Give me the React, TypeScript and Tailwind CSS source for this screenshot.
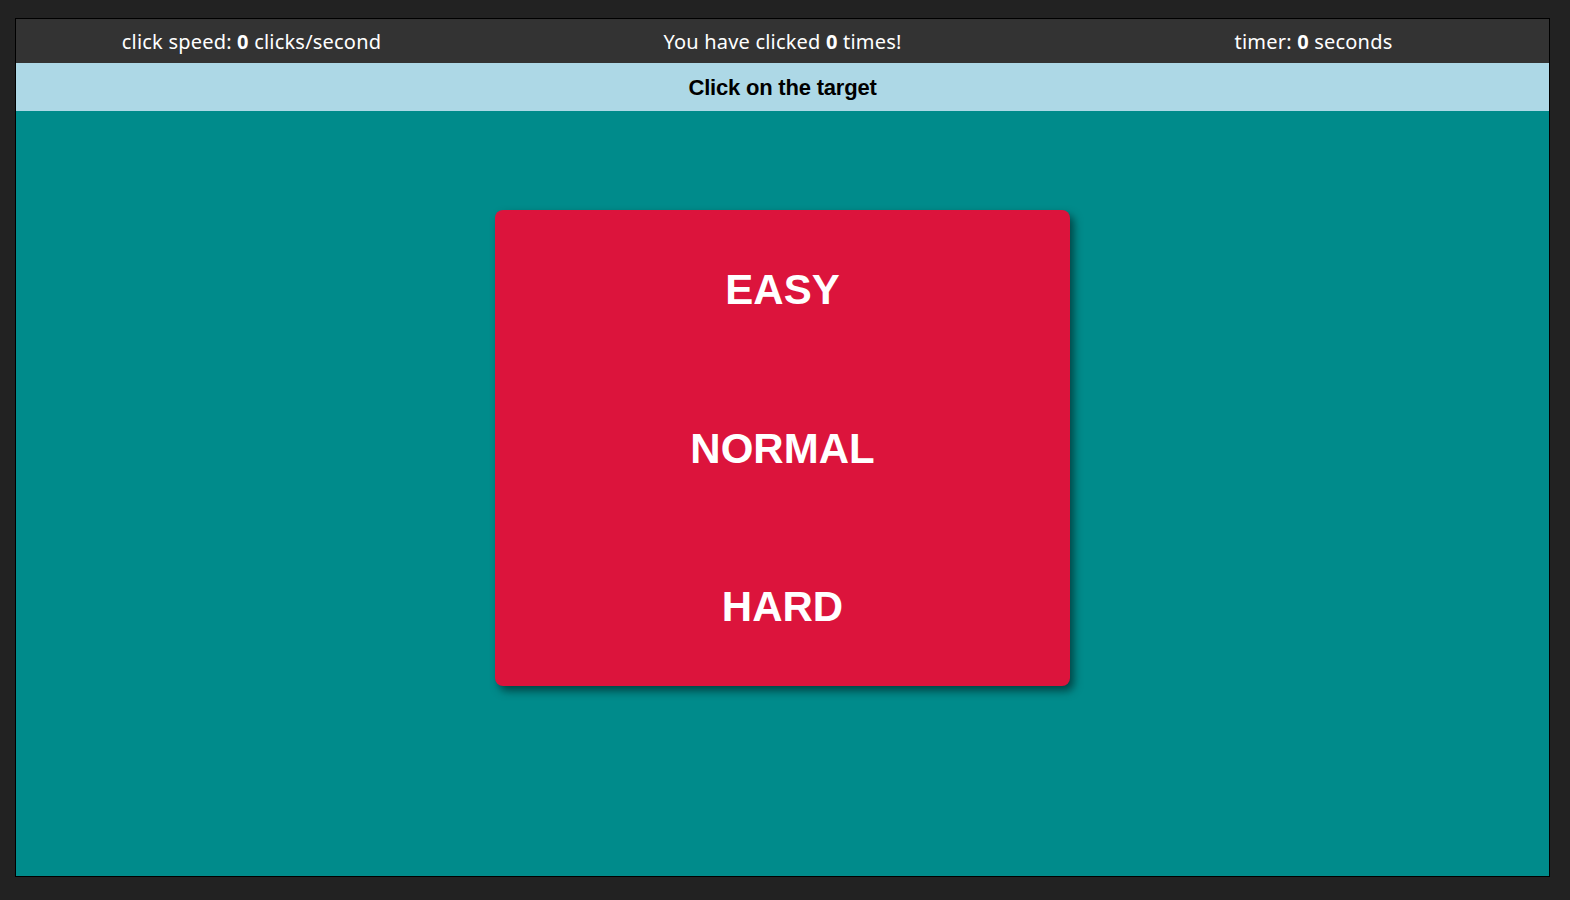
import React from "react";

export default function App() {
  const head = { fontFamily: '"Comic Sans MS", "Noto Sans", sans-serif' };
  return (
    <div className="w-[1570px] h-[900px] bg-[#222222] pt-[18px] pl-[15px]">
      <div className="w-[1535px] h-[859px] border border-black bg-[#008b8b] flex flex-col overflow-hidden">
        <div className="h-[44px] bg-[#333333] flex justify-center items-center pt-[2px] text-white text-[20px] tracking-[0.2px] shrink-0" style={head}>
          <div className="w-[531px] shrink-0 text-center">click speed: <b>0</b> clicks/second</div>
          <div className="w-[531px] shrink-0 text-center">You have clicked <b>0</b> times!</div>
          <div className="w-[531px] shrink-0 text-center">timer: <b>0</b> seconds</div>
        </div>
        <div className="h-[48px] bg-[#add8e6] flex items-center justify-center shrink-0 text-black font-bold text-[22px] tracking-[-0.2px]" style={{ fontFamily: '"Liberation Sans", Arial, sans-serif' }}>
          Click on the target
        </div>
        <div className="flex justify-center pt-[99px]">
          <div className="w-[575px] h-[476px] bg-[#dc143c] rounded-[8px] shadow-[4px_5px_8px_rgba(0,0,0,0.5)] flex flex-col text-white font-bold text-[42px]" style={{ fontFamily: '"Liberation Sans", Arial, sans-serif' }}>
            <div className="flex-1 flex items-center justify-center">EASY</div>
            <div className="flex-1 flex items-center justify-center">NORMAL</div>
            <div className="flex-1 flex items-center justify-center">HARD</div>
          </div>
        </div>
      </div>
    </div>
  );
}
